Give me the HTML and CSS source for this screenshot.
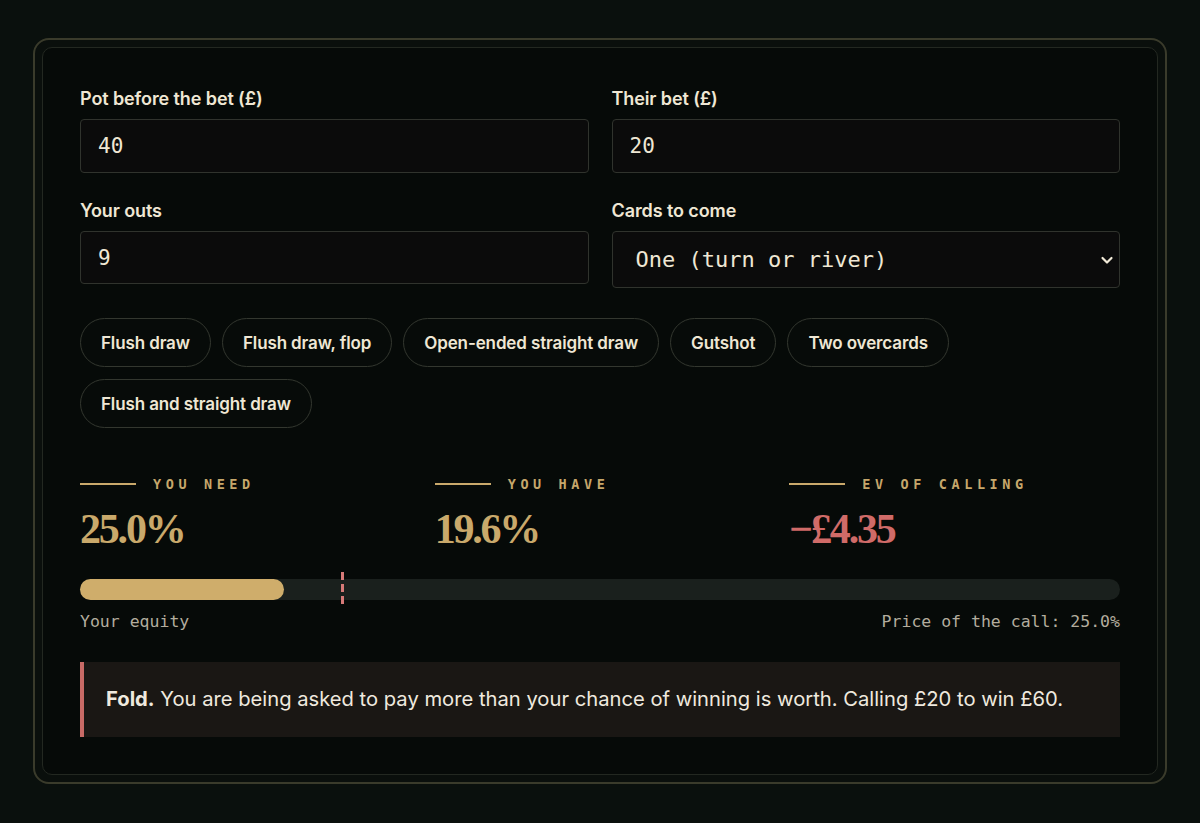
FILE: index.html
```html
<!DOCTYPE html>
<html lang="en">
<head>
<meta charset="utf-8">
<title>Pot odds</title>
<link rel="stylesheet" href="styles.css">
</head>
<body>
<div class="frame">
  <div class="card">
    <div class="fields">
      <label class="field">
        <span class="label">Pot before the bet (£)</span>
        <input class="input" type="text" value="40">
      </label>
      <label class="field">
        <span class="label">Their bet (£)</span>
        <input class="input" type="text" value="20">
      </label>
      <label class="field">
        <span class="label">Your outs</span>
        <input class="input" type="text" value="9">
      </label>
      <label class="field">
        <span class="label">Cards to come</span>
        <span class="select-wrap">
          <select class="select">
            <option>One (turn or river)</option>
            <option>Two (turn and river)</option>
          </select>
          <svg class="chevron" width="14" height="10" viewBox="0 0 14 10"><path d="M2.5 3 L7 7.5 L11.5 3" fill="none" stroke="#f2ead8" stroke-width="2.2" stroke-linecap="round" stroke-linejoin="round"/></svg>
        </span>
      </label>
    </div>

    <div class="chips">
      <button class="chip">Flush draw</button>
      <button class="chip">Flush draw, flop</button>
      <button class="chip">Open-ended straight draw</button>
      <button class="chip">Gutshot</button>
      <button class="chip">Two overcards</button>
      <button class="chip">Flush and straight draw</button>
    </div>

    <div class="stats">
      <div class="stat">
        <div class="stat-label"><span class="rule"></span>YOU NEED</div>
        <div class="stat-value">25.0%</div>
      </div>
      <div class="stat">
        <div class="stat-label"><span class="rule"></span>YOU HAVE</div>
        <div class="stat-value">19.6%</div>
      </div>
      <div class="stat">
        <div class="stat-label"><span class="rule"></span>EV OF CALLING</div>
        <div class="stat-value negative">−£4.35</div>
      </div>
    </div>

    <div class="meter">
      <div class="track">
        <div class="fill" style="width: 19.6%"></div>
        <div class="marker" style="left: 25%"></div>
      </div>
      <div class="meter-caption">
        <span>Your equity</span>
        <span>Price of the call: 25.0%</span>
      </div>
    </div>

    <div class="verdict">
      <strong>Fold.</strong> You are being asked to pay more than your chance of winning is worth. Calling £20 to win £60.
    </div>
  </div>
</div>
</body>
</html>
```

FILE: styles.css
```css
* { box-sizing: border-box; }

html, body {
  margin: 0;
  background: #0a100d;
}

body {
  padding: 38px 33px 40px;
  font-family: Inter, "Noto Sans", sans-serif;
  color: #efe7d4;
}

.frame {
  border: 2px solid #3a3b2b;
  border-radius: 16px;
  padding: 7px;
  background: #0a0f0c;
}

.card {
  border: 1px solid #232821;
  border-radius: 10px;
  background: #060a08;
  padding: 38px 37px 37px;
}

.fields {
  display: grid;
  grid-template-columns: 1fr 1fr;
  column-gap: 23px;
  row-gap: 25px;
}

.field {
  display: flex;
  flex-direction: column;
  gap: 7px;
}

.label {
  font-size: 18px;
  line-height: 26px;
  font-weight: 600;
  color: #efe7d4;
  letter-spacing: -0.1px;
}

.input {
  height: 54px;
  background: #0b0b0b;
  border: 1px solid #30332d;
  border-radius: 4px;
  padding: 0 17px;
  font-family: "DejaVu Sans Mono", "Liberation Mono", monospace;
  font-size: 21px;
  color: #efe7d4;
  outline: none;
}

.field:nth-child(3) .input { height: 53px; }

.select-wrap {
  position: relative;
  display: block;
}

.select {
  width: 100%;
  height: 57px;
  appearance: none;
  -webkit-appearance: none;
  background: #0b0b0b;
  border: 1px solid #30332d;
  border-radius: 4px;
  padding: 0 23px;
  font-family: "DejaVu Sans Mono", "Liberation Mono", monospace;
  font-size: 22px;
  color: #efe7d4;
  outline: none;
}

.chevron {
  position: absolute;
  right: 6px;
  top: 24px;
}

.chips {
  display: flex;
  flex-wrap: wrap;
  gap: 12px 11px;
  margin-top: 30px;
}

.chip {
  height: 49px;
  padding: 0 20px;
  border: 1px solid #33372f;
  border-radius: 999px;
  background: #070b09;
  color: #efe7d4;
  font-family: Inter, "Noto Sans", sans-serif;
  font-size: 17px;
  font-weight: 600;
  letter-spacing: -0.12px;
}

.stats {
  display: grid;
  grid-template-columns: repeat(3, 1fr);
  gap: 24px;
  margin-top: 47px;
}

.stat-label {
  display: flex;
  align-items: center;
  gap: 17px;
  font-family: "DejaVu Sans Mono", "Liberation Mono", monospace;
  font-size: 13.5px;
  font-weight: 700;
  line-height: 18px;
  letter-spacing: 4.6px;
  color: #c6a76b;
}

.rule {
  width: 56px;
  height: 1.5px;
  background: #c9a96b;
}

.stat-value {
  margin-top: 14px;
  font-family: "Liberation Serif", "DejaVu Serif", serif;
  font-weight: 700;
  font-size: 42px;
  line-height: 44px;
  letter-spacing: -2.2px;
  color: #c9a96b;
}

.stat-value.negative { color: #d06b68; }

.meter {
  margin-top: 28px;
}

.track {
  position: relative;
  height: 21px;
  border-radius: 999px;
  background: #1a201d;
}

.fill {
  height: 100%;
  border-radius: 999px;
  background: #cfad6b;
}

.marker {
  position: absolute;
  top: -7px;
  bottom: -7px;
  width: 2.5px;
  margin-left: 1px;
  background: repeating-linear-gradient(to bottom, #d67a78 0 8px, transparent 8px 12px);
}

.meter-caption {
  display: flex;
  justify-content: space-between;
  margin-top: 12px;
  font-family: "DejaVu Sans Mono", "Liberation Mono", monospace;
  font-size: 16.5px;
  line-height: 20px;
  color: #b3ad9e;
}

.verdict {
  margin-top: 30px;
  background: #1a1714;
  border-left: 4px solid #c86a66;
  padding: 23px 22px 24px;
  font-size: 20.2px;
  line-height: 28px;
  letter-spacing: 0;
  color: #efe9df;
}

.verdict strong { font-weight: 700; }
```
